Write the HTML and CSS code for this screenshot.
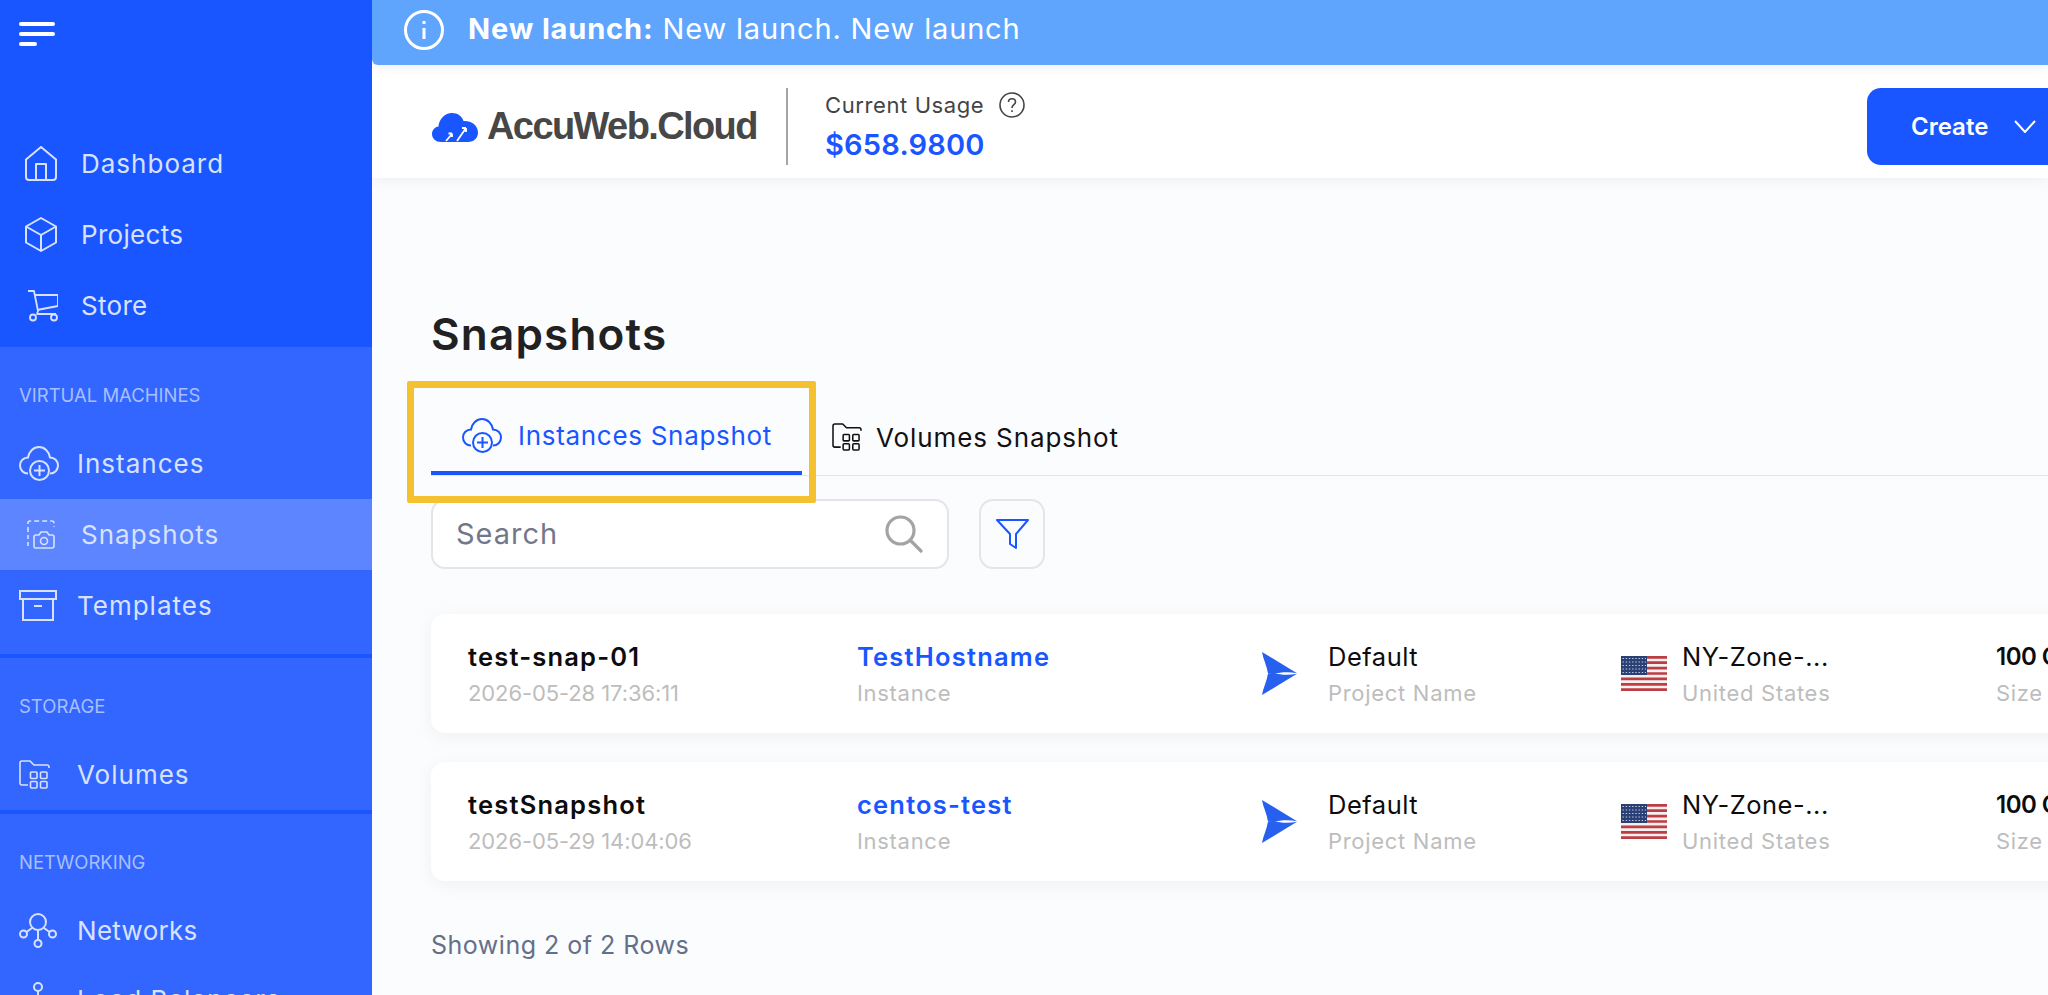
FILE: index.html
```html
<!DOCTYPE html>
<html lang="en">
<head>
    <meta charset="UTF-8">
    <meta name="viewport" content="width=device-width, initial-scale=1.0">
    <title>Snapshots</title>
    <link rel="stylesheet" href="styles.css">
</head>
<body>
    <svg class="icon-defs" xmlns="http://www.w3.org/2000/svg">
        <symbol id="cloud-plus" viewBox="0 0 40 35">
            <path d="M9 27.500C4.500 27.500 1 24 1 19.500S4.500 11.500 9 11.500C10 5.500 14.500 1 20 1S30 5.500 31 11.500C35.500 11.500 39 15 39 19.500S35.500 27.500 31 27.500" fill="none" stroke="currentColor" stroke-width="2"/>
            <circle cx="20.500" cy="24.500" r="9.500" fill="none" stroke="currentColor" stroke-width="2"/>
            <path d="M20.500 19V30M15 24.500H26" fill="none" stroke="currentColor" stroke-width="2"/>
        </symbol>
        <symbol id="folder-grid" viewBox="0 0 31 29">
            <path d="M9 25H3Q1 25 1 23V3Q1 1 3 1H11L15 5H28Q30 5 30 7V8" fill="none" stroke="currentColor" stroke-width="1.600"/>
            <rect x="11.500" y="12" width="6.500" height="6.500" rx="1" fill="none" stroke="currentColor" stroke-width="1.600"/>
            <rect x="21.500" y="12" width="6.500" height="6.500" rx="1" fill="none" stroke="currentColor" stroke-width="1.600"/>
            <rect x="11.500" y="21.500" width="6.500" height="6.500" rx="1" fill="none" stroke="currentColor" stroke-width="1.600"/>
            <rect x="21.500" y="21.500" width="6.500" height="6.500" rx="1" fill="none" stroke="currentColor" stroke-width="1.600"/>
        </symbol>
        <symbol id="plane" viewBox="0 0 35 43">
            <path d="M0 0L35 21.200C27 19.500 18 20 12 22L6 21.500C5 14 1 7 0 0Z" fill="#2760ee"/>
            <path d="M0 43L35 21.800C27 23.500 18 23 12 21L6 21.500C5 29 1 36 0 43Z" fill="#2760ee"/>
        </symbol>
        <symbol id="flag-us" viewBox="0 0 46 35">
            <rect width="46" height="35" fill="#f4f0f0"/>
            <path d="M0 1.350H46M0 6.700H46M0 12.100H46M0 17.500H46M0 22.900H46M0 28.300H46M0 33.650H46" stroke="#bd3d44" stroke-width="2.700"/>
            <rect width="26" height="19" fill="#2a3f74"/>
            <path d="M1.500 2.500H25M1.500 6H25M1.500 9.500H25M1.500 13H25M1.500 16.500H25" stroke="#c4cbe0" stroke-width="1.200" stroke-dasharray="1.400 1.800"/>
        </symbol>
    </svg>

    <div class="app">
        <aside class="sidebar">
            <div class="side-top">
                <div class="burger">
                    <span class="burger-long"></span>
                    <span class="burger-long"></span>
                    <span class="burger-short"></span>
                </div>
                <a class="nav-item nav-top">
                    <span class="nav-icon">
                        <svg width="32" height="35" viewBox="0 0 32 35" fill="none" stroke="currentColor" stroke-width="2" stroke-linejoin="round"><path d="M1 13.500L16 1L31 13.500V31Q31 34 28 34H4Q1 34 1 31Z"/><path d="M11 34V18H21V34"/></svg>
                    </span>
                    Dashboard
                </a>
                <a class="nav-item nav-top nav-tight">
                    <span class="nav-icon">
                        <svg width="32" height="35" viewBox="0 0 32 35" fill="none" stroke="currentColor" stroke-width="2" stroke-linejoin="round"><path d="M16 1L31 9.500V25.500L16 34L1 25.500V9.500Z"/><path d="M1 9.500L16 18L31 9.500M16 18V34"/></svg>
                    </span>
                    Projects
                </a>
                <a class="nav-item nav-top nav-tight">
                    <span class="nav-icon">
                        <svg width="33" height="32" viewBox="0 0 33 32" fill="none" stroke="currentColor" stroke-width="1.800" stroke-linejoin="round"><path d="M3 1H9L13 21L12 24H31"/><path d="M10 5H33V16L12 20"/><circle cx="8" cy="27.500" r="3"/><circle cx="29" cy="27.500" r="3"/></svg>
                    </span>
                    Store
                </a>
            </div>

            <div class="side-group side-group-first">
                <div class="group-label">VIRTUAL MACHINES</div>
                <a class="nav-item">
                    <span class="nav-icon">
                        <svg width="40" height="35"><use href="#cloud-plus"/></svg>
                    </span>
                    Instances
                </a>
                <a class="nav-item nav-active">
                    <span class="nav-icon">
                        <svg width="28" height="29" viewBox="0 0 28 29" fill="none" stroke="currentColor" stroke-width="1.600"><path d="M1 12V3Q1 1 3 1H25Q27 1 27 3V7" stroke-dasharray="5 3"/><path d="M1 15V26" stroke-dasharray="4 3"/><path d="M8 28Q7 28 7 26V17Q7 15 9 15H12L14 12H20L22 15H25Q27 15 27 17V26Q27 28 25 28Z"/><circle cx="17" cy="21" r="3.500"/></svg>
                    </span>
                    Snapshots
                </a>
                <a class="nav-item">
                    <span class="nav-icon">
                        <svg width="38" height="31" viewBox="0 0 38 31" fill="none" stroke="currentColor" stroke-width="2"><rect x="1" y="1" width="36" height="8"/><path d="M4 9V30H34V9"/><path d="M15 16H23"/></svg>
                    </span>
                    Templates
                </a>
            </div>

            <div class="side-group">
                <div class="group-label">STORAGE</div>
                <a class="nav-item">
                    <span class="nav-icon">
                        <svg width="31" height="29"><use href="#folder-grid"/></svg>
                    </span>
                    Volumes
                </a>
            </div>

            <div class="side-group">
                <div class="group-label">NETWORKING</div>
                <a class="nav-item nav-tight">
                    <span class="nav-icon">
                        <svg width="38" height="35" viewBox="0 0 38 35" fill="none" stroke="currentColor" stroke-width="2"><circle cx="19" cy="9" r="8"/><circle cx="4.500" cy="21" r="3.500"/><circle cx="33.500" cy="21" r="3.500"/><circle cx="19" cy="30.500" r="3.500"/><path d="M19 17V27M13 15L7.500 19M25 15L30.500 19"/></svg>
                    </span>
                    Networks
                </a>
                <a class="nav-item nav-clipped">
                    <span class="nav-icon">
                        <svg width="38" height="35" viewBox="0 0 38 35" fill="none" stroke="currentColor" stroke-width="2"><circle cx="19" cy="5" r="4"/><path d="M19 9V20M6 20H32"/></svg>
                    </span>
                    Load Balancers
                </a>
            </div>
        </aside>

        <div class="main">
            <div class="banner">
                <svg class="banner-icon" width="40" height="40" viewBox="0 0 40 40" fill="none" stroke="#fff" stroke-width="3"><circle cx="20" cy="20" r="18.500"/><path d="M20 18V29"/><path d="M20 11V14"/></svg>
                <span class="banner-text"><b>New launch:</b> New launch. New launch</span>
            </div>

            <header class="topbar">
                <div class="logo">
                    <svg width="46" height="30" viewBox="0 0 46 30">
                        <path d="M9 30C4 30 0 26.500 0 22C0 18 3 15 6.500 14.500C7 7 13 1 20 1C26 1 30 4.500 31.500 9C39 8.500 46 13 46 20.500C46 26 42 30 36 30Z" fill="#1a56ff"/>
                        <path d="M14 29L20 22M20 21.500H16.500M20 21.500V25M25 29L34 16M34 16H30M34 16V20" stroke="#fff" stroke-width="1.800" fill="none"/>
                    </svg>
                    <span class="logo-text">AccuWeb.Cloud</span>
                </div>
                <div class="usage">
                    <div class="usage-label">
                        Current Usage
                        <svg width="26" height="26" viewBox="0 0 26 26" fill="none" stroke="#444" stroke-width="1.600"><circle cx="13" cy="13" r="12"/><path d="M9.500 10C9.500 8 11 6.800 13 6.800S16.500 8 16.500 10C16.500 13 13 12.500 13 16"/><path d="M13 18.300V20"/></svg>
                    </div>
                    <div class="usage-value">$658.9800</div>
                </div>
                <button class="create-btn">
                    Create
                    <svg width="22" height="13" viewBox="0 0 22 13" fill="none" stroke="#fff" stroke-width="2"><path d="M1 1L11 12L21 1"/></svg>
                </button>
            </header>

            <div class="content">
                <h1 class="page-title">Snapshots</h1>

                <div class="tabs">
                    <div class="tab tab-active">
                        <svg width="40" height="35"><use href="#cloud-plus"/></svg>
                        Instances Snapshot
                    </div>
                    <div class="tab">
                        <svg width="30" height="28"><use href="#folder-grid"/></svg>
                        Volumes Snapshot
                    </div>
                    <div class="tab-highlight"></div>
                </div>

                <div class="filters">
                    <div class="search-box">
                        <span class="search-text">Search</span>
                        <svg width="38" height="38" viewBox="0 0 38 38" fill="none" stroke="#a3a3a3" stroke-width="3.200" stroke-linecap="round"><circle cx="15.500" cy="15.500" r="13.500"/><path d="M25.500 25.500L36 36"/></svg>
                    </div>
                    <div class="filter-btn">
                        <svg width="33" height="30" viewBox="0 0 33 30" fill="none" stroke="#1a56ff" stroke-width="2" stroke-linejoin="round"><path d="M1 1H32L20 15V29L14 25V15Z"/></svg>
                    </div>
                </div>

                <div class="card-list">
                    <div class="card">
                        <div class="cell">
                            <div class="cell-title">test-snap-01</div>
                            <div class="cell-sub cell-date">2026-05-28 17:36:11</div>
                        </div>
                        <div class="cell">
                            <div class="cell-title cell-link">TestHostname</div>
                            <div class="cell-sub">Instance</div>
                        </div>
                        <div class="cell cell-icon">
                            <svg class="plane" width="35" height="43"><use href="#plane"/></svg>
                            <div>
                                <div class="cell-title cell-plain">Default</div>
                                <div class="cell-sub">Project Name</div>
                            </div>
                        </div>
                        <div class="cell cell-icon">
                            <svg class="flag" width="46" height="35"><use href="#flag-us"/></svg>
                            <div>
                                <div class="cell-title cell-plain">NY-Zone-...</div>
                                <div class="cell-sub">United States</div>
                            </div>
                        </div>
                        <div class="cell">
                            <div class="cell-title cell-size">100 GB</div>
                            <div class="cell-sub">Size</div>
                        </div>
                    </div>

                    <div class="card">
                        <div class="cell">
                            <div class="cell-title">testSnapshot</div>
                            <div class="cell-sub cell-date">2026-05-29 14:04:06</div>
                        </div>
                        <div class="cell">
                            <div class="cell-title cell-link">centos-test</div>
                            <div class="cell-sub">Instance</div>
                        </div>
                        <div class="cell cell-icon">
                            <svg class="plane" width="35" height="43"><use href="#plane"/></svg>
                            <div>
                                <div class="cell-title cell-plain">Default</div>
                                <div class="cell-sub">Project Name</div>
                            </div>
                        </div>
                        <div class="cell cell-icon">
                            <svg class="flag" width="46" height="35"><use href="#flag-us"/></svg>
                            <div>
                                <div class="cell-title cell-plain">NY-Zone-...</div>
                                <div class="cell-sub">United States</div>
                            </div>
                        </div>
                        <div class="cell">
                            <div class="cell-title cell-size">100 GB</div>
                            <div class="cell-sub">Size</div>
                        </div>
                    </div>
                </div>

                <div class="row-count">Showing 2 of 2 Rows</div>
            </div>
        </div>
    </div>
</body>
</html>
```

FILE: styles.css
```css
body {
    margin: 0;
    font-family: Inter, "Noto Sans", sans-serif;
    background-color: #fbfcfe;
    height: 100vh;
    overflow: hidden;
}

.icon-defs {
    display: none;
}

.app {
    display: flex;
    height: 100vh;
    overflow: hidden;
}

/* Sidebar */
.sidebar {
    width: 372px;
    flex-shrink: 0;
    height: 100vh;
    overflow: hidden;
    background-color: #3366ff;
    color: #d8e2ff;
}

.side-top {
    height: 347px;
    background-color: #1a56ff;
    padding-top: 22px;
    box-sizing: border-box;
}

.burger {
    display: flex;
    flex-direction: column;
    gap: 6px;
    margin-left: 19px;
    height: 106px;
}

.burger span {
    height: 4px;
    border-radius: 2px;
    background-color: #fff;
}

.burger-long {
    width: 36px;
}

.burger-short {
    width: 18px;
}

.nav-item {
    display: flex;
    align-items: center;
    height: 71px;
    padding-left: 19px;
    font-size: 26px;
    letter-spacing: 1px;
}

.nav-tight {
    letter-spacing: 0.3px;
}

.nav-clipped {
    margin-top: -2px;
}

.nav-icon {
    display: flex;
    align-items: center;
    width: 58px;
    flex-shrink: 0;
}

.nav-top {
    padding-left: 25px;
}

.nav-top .nav-icon {
    width: 56px;
}

.nav-active {
    background-color: #5c85ff;
    padding-left: 27px;
}

.nav-active .nav-icon {
    width: 54px;
}

.side-group {
    border-bottom: 4px solid #1a56ff;
}

.side-group-first {
    height: 311px;
    box-sizing: border-box;
}

.side-group:last-child {
    border-bottom: none;
}

.group-label {
    height: 81px;
    padding: 37px 0 0 19px;
    box-sizing: border-box;
    font-size: 18.500px;
    line-height: 22px;
    color: #a8bfff;
}

/* Banner and header */
.main {
    flex: 1;
    min-width: 0;
    display: flex;
    flex-direction: column;
    overflow: hidden;
}

.banner {
    display: flex;
    align-items: center;
    height: 65px;
    flex-shrink: 0;
    padding-left: 32px;
    background-color: #60a5fd;
    border-bottom-left-radius: 6px;
    box-shadow: 0 2px 12px rgba(0, 0, 0, 0.07);
    color: #fff;
    font-size: 29px;
    letter-spacing: 0.85px;
    position: relative;
    z-index: 1;
}

.banner-icon {
    margin-top: -5px;
}

.banner-text {
    margin-left: 24px;
    margin-top: -8px;
}

.banner-text b {
    font-weight: 700;
}

.topbar {
    display: flex;
    align-items: center;
    height: 113px;
    flex-shrink: 0;
    box-sizing: border-box;
    padding: 10px 0 0 60px;
    background-color: #fff;
    box-shadow: 0 3px 14px rgba(0, 0, 0, 0.05);
    position: relative;
}

.logo {
    display: flex;
    align-items: center;
    gap: 9px;
    width: 356px;
    height: 77px;
    box-sizing: border-box;
    border-right: 2px solid #a5a5a5;
}

.logo svg {
    flex-shrink: 0;
}

.logo-text {
    font-family: "Liberation Sans", sans-serif;
    font-weight: 700;
    font-size: 38px;
    color: #474747;
    letter-spacing: -1.600px;
}

.usage {
    margin-left: 37px;
}

.usage-label {
    display: flex;
    align-items: center;
    gap: 15px;
    font-size: 22px;
    letter-spacing: 0.6px;
    color: #444;
    height: 30px;
    margin-top: -1px;
}

.usage-value {
    font-size: 29px;
    font-weight: 600;
    letter-spacing: 0.2px;
    color: #1a56ff;
    margin-top: 8px;
    line-height: 34px;
}

.create-btn {
    display: flex;
    align-items: center;
    gap: 26px;
    margin-left: auto;
    margin-right: -30px;
    width: 211px;
    height: 77px;
    padding: 0 0 0 44px;
    border: none;
    border-radius: 14px;
    background-color: #1a56ff;
    color: #fff;
    font-family: Inter, sans-serif;
    font-size: 24px;
    font-weight: 600;
}

/* Page content */
.content {
    flex: 1;
    padding-left: 59px;
    overflow: hidden;
}

.page-title {
    margin: 131px 0 0;
    font-size: 44px;
    line-height: 50px;
    font-weight: 600;
    letter-spacing: 1.200px;
    color: #212121;
}

.tabs {
    display: flex;
    position: relative;
    height: 81px;
    margin-top: 36px;
    border-bottom: 1px solid #e2e4e8;
    box-sizing: border-box;
}

.tab {
    display: flex;
    align-items: center;
    gap: 14px;
    height: 80px;
    font-size: 26px;
    letter-spacing: 0.9px;
    color: #111;
    padding: 4px 0 0 30px;
    box-sizing: border-box;
}

.tab-active {
    width: 371px;
    border-bottom: 4px solid #1a56ff;
    color: #1a56ff;
    gap: 16px;
    letter-spacing: 0.7px;
    padding: 4px 0 0 31px;
}

/* yellow annotation drawn on top of the screenshot */
.tab-highlight {
    position: absolute;
    left: -24px;
    top: -14px;
    width: 409px;
    height: 122px;
    box-sizing: border-box;
    border: 7px solid #f4c230;
    border-radius: 2px;
}

.filters {
    display: flex;
    gap: 30px;
    margin-top: 23px;
}

.search-box {
    display: flex;
    align-items: center;
    justify-content: space-between;
    width: 518px;
    height: 70px;
    box-sizing: border-box;
    padding: 0 24px 0 23px;
    background-color: #fff;
    border: 2px solid #e3e5e8;
    border-radius: 14px;
}

.search-text {
    font-size: 29px;
    letter-spacing: 1px;
    color: #72788a;
    margin-top: -2px;
}

.filter-btn {
    display: flex;
    align-items: center;
    justify-content: center;
    width: 66px;
    height: 70px;
    box-sizing: border-box;
    border: 2px solid #e3e5e8;
    border-radius: 14px;
}

.card-list {
    display: flex;
    flex-direction: column;
    gap: 29px;
    margin-top: 45px;
}

.card {
    display: grid;
    grid-template-columns: 389px 405px 359px 375px 200px;
    align-items: center;
    width: 1800px;
    height: 119px;
    box-sizing: border-box;
    padding-left: 37px;
    background-color: #fff;
    border-radius: 14px;
    box-shadow: 0 4px 18px rgba(0, 0, 0, 0.05);
}

.cell-icon {
    display: flex;
    align-items: center;
}

.plane {
    margin-right: 31px;
}

.flag {
    margin-right: 15px;
}

.cell-title {
    font-size: 25.500px;
    font-weight: 600;
    letter-spacing: 1.200px;
    line-height: 32px;
    padding-top: 2px;
    color: #0c0c0c;
}

.cell-plain {
    font-weight: 400;
    letter-spacing: 0.5px;
}

.cell-link {
    color: #1a56ff;
}

.cell-size {
    font-size: 24px;
    letter-spacing: -0.5px;
    white-space: nowrap;
}

.cell-sub {
    font-size: 22px;
    letter-spacing: 0.7px;
    line-height: 30px;
    margin-top: 5px;
    color: #bdbdbd;
}

.cell-date {
    letter-spacing: -0.1px;
}

.row-count {
    margin-top: 49px;
    font-size: 25px;
    letter-spacing: 0.5px;
    line-height: 30px;
    color: #64708a;
}
```
